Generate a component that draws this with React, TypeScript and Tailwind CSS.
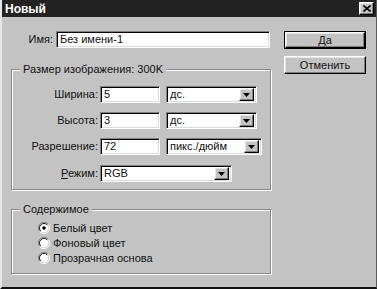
import React from 'react';

const sunken =
  'bg-white border-t border-l border-t-[#808080] border-l-[#808080] border-b border-r border-b-white border-r-white shadow-[inset_1px_1px_0_#000,inset_-1px_-1px_0_#dcdcdc]';
const raised =
  'bg-[#c3c3c3] border-t border-l border-t-white border-l-white border-b border-r border-b-black border-r-black shadow-[inset_-1px_-1px_0_#808080,inset_1px_1px_0_#e4e4e4]';

function TextBox({ value, w }: { value: string; w: string }) {
  return (
    <div className={`${sunken} ${w} h-[17px] flex items-center px-[3px] text-[11px] leading-none`}>
      {value}
    </div>
  );
}

function Select({ value, w }: { value: string; w: string }) {
  return (
    <div className={`${sunken} ${w} h-[17px] flex items-center justify-between pl-[3px] pr-[2px] text-[11px] leading-none`}>
      <span>{value}</span>
      <div className={`${raised} w-[15px] h-[13px] flex items-center justify-center`}>
        <svg width="7" height="4" viewBox="0 0 7 4">
          <path d="M0 0h7L3.5 4z" fill="#000" />
        </svg>
      </div>
    </div>
  );
}

function Radio({ checked, label }: { checked?: boolean; label: string }) {
  return (
    <div className="flex items-center h-[14px] pl-[26px] gap-[3px]">
      <svg width="12" height="12" viewBox="0 0 12 12">
        <path d="M10.5 2.5A5.5 5.5 0 0 0 1.5 9.5" stroke="#808080" fill="none" />
        <path d="M1.5 9.5A5.5 5.5 0 0 0 10.5 2.5" stroke="#fff" fill="none" />
        <circle cx="6" cy="6" r="4.5" fill="#fff" />
        <path d="M9.2 2.8A4.5 4.5 0 0 0 2.8 9.2" stroke="#222" fill="none" />
        {checked && <circle cx="6" cy="6" r="1.8" fill="#000" />}
      </svg>
      <span>{label}</span>
    </div>
  );
}

function Group({ title, h, children }: { title: string; h: string; children: React.ReactNode }) {
  return (
    <div className={`relative ${h} border border-[#8a8a8a] shadow-[1px_1px_0_#fff,inset_1px_1px_0_#fff]`}>
      <span className="absolute left-[8px] top-[-7px] bg-[#c3c3c3] px-[3px] leading-[12px]">{title}</span>
      {children}
    </div>
  );
}

function Row({ label, mt, children }: { label: React.ReactNode; mt: string; children: React.ReactNode }) {
  return (
    <div className={`flex items-center ${mt}`}>
      <div className="w-[88px] text-right pr-[2px]">{label}</div>
      {children}
    </div>
  );
}

export default function App() {
  return (
    <div className="w-[377px] h-[289px] bg-[#c3c3c3] flex flex-col border-l-2 border-l-[#e6e6e6] border-r border-r-[#5a5a5a] border-b-2 border-b-[#111] font-['Liberation_Sans',Arial,sans-serif] text-[11px] text-[#111] overflow-hidden">
      {/* title bar */}
      <div className="h-[17px] bg-[#232323] flex items-center justify-between pl-[3px] pr-[2px] shrink-0">
        <span className="text-white font-bold text-[12px] leading-none">Новый</span>
        <div className={`${raised} w-[15px] h-[13px] flex items-center justify-center`}>
          <svg width="8" height="7" viewBox="0 0 8 7">
            <path d="M0.5 0.5l7 6M7.5 0.5l-7 6" stroke="#000" strokeWidth="1.6" />
          </svg>
        </div>
      </div>

      <div className="flex pt-[14px] pl-[9px]">
        {/* left column */}
        <div className="w-[260px] flex flex-col">
          <div className="flex items-center">
            <div className="w-[45px] text-right pr-[3px]">Имя:</div>
            <TextBox value="Без имени-1" w="w-[214px]" />
          </div>

          <div className="mt-[21px]">
            <Group title="Размер изображения: 300K" h="h-[121px]">
              <Row label="Ширина:" mt="mt-[16px]">
                <TextBox value="5" w="w-[60px]" />
                <div className="w-[6px]" />
                <Select value="дс." w="w-[91px]" />
              </Row>
              <Row label="Высота:" mt="mt-[9px]">
                <TextBox value="3" w="w-[60px]" />
                <div className="w-[6px]" />
                <Select value="дс." w="w-[91px]" />
              </Row>
              <Row label="Разрешение:" mt="mt-[9px]">
                <TextBox value="72" w="w-[60px]" />
                <div className="w-[6px]" />
                <Select value="пикс./дюйм" w="w-[96px]" />
              </Row>
              <Row
                label={
                  <span>
                    <span className="underline">Р</span>ежим:
                  </span>
                }
                mt="mt-[10px]"
              >
                <Select value="RGB" w="w-[132px]" />
              </Row>
            </Group>
          </div>

          <div className="mt-[19px]">
            <Group title="Содержимое" h="h-[65px]">
              <div className="flex flex-col pt-[11px] gap-[1px]">
                <Radio checked label="Белый цвет" />
                <Radio label="Фоновый цвет" />
                <Radio label="Прозрачная основа" />
              </div>
            </Group>
          </div>
        </div>

        {/* buttons */}
        <div className="ml-[13px] flex flex-col gap-[7px]">
          <div className="border border-black">
            <div className={`${raised} w-[80px] h-[16px] flex items-center justify-center leading-none`}>Да</div>
          </div>
          <div className={`${raised} w-[82px] h-[18px] flex items-center justify-center leading-none`}>Отменить</div>
        </div>
      </div>
    </div>
  );
}
